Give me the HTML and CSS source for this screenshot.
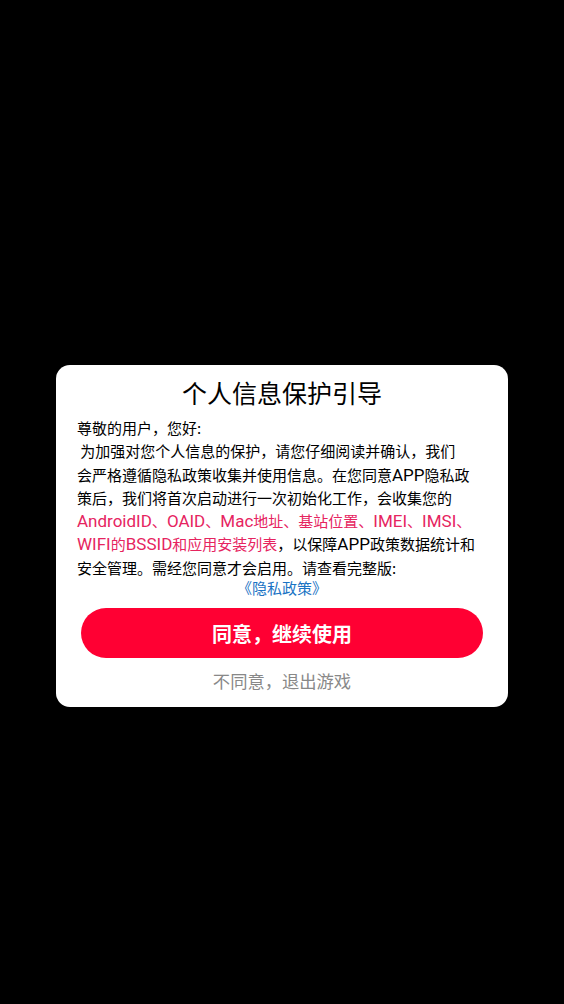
FILE: index.html
```html
<!DOCTYPE html>
<html lang="zh-CN">
<head>
    <meta charset="UTF-8">
    <meta name="viewport" content="width=device-width, initial-scale=1.0">
    <title>个人信息保护引导</title>
    <link rel="stylesheet" href="styles.css">
</head>
<body>
    <div class="privacy-dialog">
        <div class="privacy-title">个人信息保护引导</div>
        <div class="privacy-text">
            尊敬的用户，您好:<br>
            &nbsp;为加强对您个人信息的保护，请您仔细阅读并确认，我们<br>
            会严格遵循隐私政策收集并使用信息。在您同意<span class="latin">APP</span>隐私政<br>
            策后，我们将首次启动进行一次初始化工作，会收集您的<br>
            <span class="highlight"><span class="latin">AndroidID</span>、<span class="latin">OAID</span>、<span class="latin">Mac</span>地址、基站位置、<span class="latin">IMEI</span>、<span class="latin">IMSI</span>、<br>
            <span class="latin">WIFI</span>的<span class="latin">BSSID</span>和应用安装列表</span>，以保障<span class="latin">APP</span>政策数据统计和<br>
            安全管理。需经您同意才会启用。请查看完整版:
        </div>
        <div class="privacy-link">《隐私政策》</div>
        <button class="btn-agree">同意，继续使用</button>
        <div class="btn-refuse">不同意，退出游戏</div>
    </div>
</body>
</html>
```

FILE: styles.css
```css
body {
    margin: 0;
    background-color: #000;
    font-family: "Noto Sans CJK SC", sans-serif;
    display: flex;
    flex-direction: column;
    align-items: center;
    padding-top: 365px;
}

.privacy-dialog {
    background: #fff;
    border-radius: 14px;
    width: 452px;
    box-sizing: border-box;
    padding: 11px 21px 14px;
    display: flex;
    flex-direction: column;
}

.privacy-title {
    font-size: 25px;
    line-height: 32px;
    color: #000;
    text-align: center;
}

.privacy-text {
    margin-top: 8px;
    font-size: 15px;
    line-height: 23.3px;
    color: #000;
    white-space: nowrap;
}

/* latin runs render larger than the cjk glyphs on the device */
.latin {
    font-family: Roboto, sans-serif;
    font-size: 17px;
    line-height: 20px;
}

.highlight {
    color: #e6245f;
}

.privacy-link {
    font-size: 15px;
    line-height: 18px;
    color: #1a73c4;
    text-align: center;
}

.btn-agree {
    margin: 11px 4px 0;
    height: 50px;
    border: none;
    border-radius: 25px;
    background: #ff0033;
    color: #fff;
    font-family: inherit;
    font-size: 20px;
    font-weight: bold;
}

.btn-refuse {
    margin-top: 11px;
    font-size: 17.3px;
    line-height: 24px;
    color: #888;
    text-align: center;
}
```
